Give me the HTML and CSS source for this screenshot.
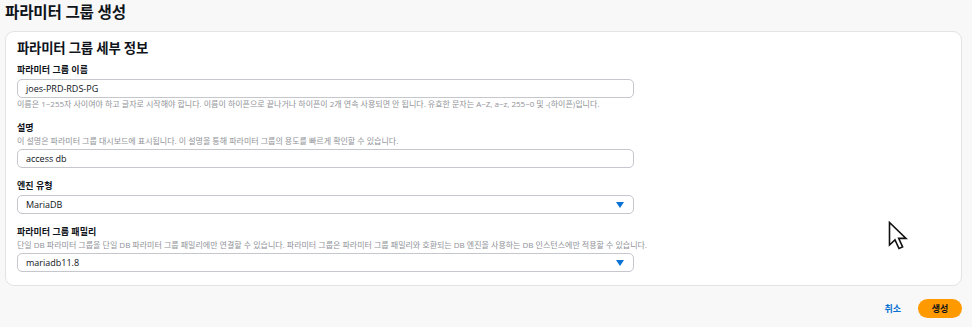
FILE: index.html
```html
<!DOCTYPE html>
<html lang="ko">
<head>
  <meta charset="UTF-8">
  <title>파라미터 그룹 생성</title>
  <link rel="stylesheet" href="styles.css">
</head>
<body>
  <div class="page">
    <h1 class="page-title">파라미터 그룹 생성</h1>

    <div class="card">
      <h2 class="card-title">파라미터 그룹 세부 정보</h2>

      <div class="field">
        <div class="field-label">파라미터 그룹 이름</div>
        <div class="input">joes-PRD-RDS-PG</div>
        <div class="hint hint-below">이름은 1~255자 사이여야 하고 글자로 시작해야 합니다. 이름이 하이픈으로 끝나거나 하이픈이 2개 연속 사용되면 안 됩니다. 유효한 문자는 A~Z, a~z, 255~0 및 -(하이픈)입니다.</div>
      </div>

      <div class="field">
        <div class="field-label">설명</div>
        <div class="hint hint-above">이 설명은 파라미터 그룹 대시보드에 표시됩니다. 이 설명을 통해 파라미터 그룹의 용도를 빠르게 확인할 수 있습니다.</div>
        <div class="input">access db</div>
      </div>

      <div class="field">
        <div class="field-label">엔진 유형</div>
        <div class="input select">
          <span>MariaDB</span>
          <svg class="caret" width="8" height="6" viewBox="0 0 8 6"><path d="M0 0 H8 L4 6 Z" fill="#0972d3"/></svg>
        </div>
      </div>

      <div class="field">
        <div class="field-label">파라미터 그룹 패밀리</div>
        <div class="hint hint-above">단일 DB 파라미터 그룹을 단일 DB 파라미터 그룹 패밀리에만 연결할 수 있습니다. 파라미터 그룹은 파라미터 그룹 패밀리와 호환되는 DB 엔진을 사용하는 DB 인스턴스에만 적용할 수 있습니다.</div>
        <div class="input select">
          <span>mariadb11.8</span>
          <svg class="caret" width="8" height="6" viewBox="0 0 8 6"><path d="M0 0 H8 L4 6 Z" fill="#0972d3"/></svg>
        </div>
      </div>
    </div>

    <div class="actions">
      <span class="link-btn">취소</span>
      <span class="primary-btn">생성</span>
    </div>
  </div>

  <!-- mouse pointer captured in the screenshot -->
  <svg class="pointer" width="24" height="30" viewBox="0 0 24 30">
    <path d="M1.5 1.5 V24 L7 18.8 L11 27.5 L14.6 25.9 L10.7 17.4 L18 17.4 Z" fill="#fff" stroke="#111" stroke-width="1.6" stroke-linejoin="miter"/>
  </svg>
</body>
</html>
```

FILE: styles.css
```css
body {
  margin: 0;
  background-color: #f8f8f8;
  font-family: "Open Sans", "Noto Sans CJK KR", sans-serif;
  color: #0f141a;
}
.page {
  position: relative;
  padding: 0 10px 0 5px;
}
.page-title {
  margin: 0;
  padding: 1px 0 0 0;
  height: 30px;
  line-height: 22px;
  font-size: 15.6px;
  font-weight: 700;
  letter-spacing: -0.2px;
}
.card {
  background-color: #fff;
  border: 1px solid #e3e3e6;
  border-radius: 9px;
  padding: 7px 11px 13px 11px;
}
.card-title {
  margin: 0 0 6px 0;
  line-height: 18px;
  font-size: 13.4px;
  font-weight: 700;
  letter-spacing: -0.2px;
}
.field {
  width: 617px;
  margin-bottom: 11px;
}
.field:last-child {
  margin-bottom: 0;
}
.field-label {
  font-size: 9px;
  font-weight: 700;
  line-height: 13px;
  margin-bottom: 3px;
}
.hint {
  font-size: 8px;
  line-height: 12px;
  color: #8f9297;
  white-space: nowrap;
}
.hint-above {
  margin-top: -2px;
  margin-bottom: 2px;
}
.input {
  box-sizing: border-box;
  height: 19px;
  border: 1px solid #c6c6cd;
  border-radius: 5px;
  padding: 0 8px;
  font-size: 9px;
  line-height: 17px;
  color: #0f141a;
}
.select {
  display: flex;
  align-items: center;
  justify-content: space-between;
}
.caret {
  margin-right: 1px;
}
.actions {
  display: flex;
  justify-content: flex-end;
  align-items: center;
  gap: 17px;
  margin-top: 13px;
}
.link-btn {
  font-size: 9px;
  font-weight: 700;
  color: #0972d3;
}
.primary-btn {
  box-sizing: border-box;
  width: 44px;
  height: 19px;
  line-height: 19px;
  text-align: center;
  background-color: #ff9900;
  border-radius: 10px;
  font-size: 9px;
  font-weight: 700;
  color: #0f141a;
}
.pointer {
  position: absolute;
  left: 888px;
  top: 221px;
}
```
